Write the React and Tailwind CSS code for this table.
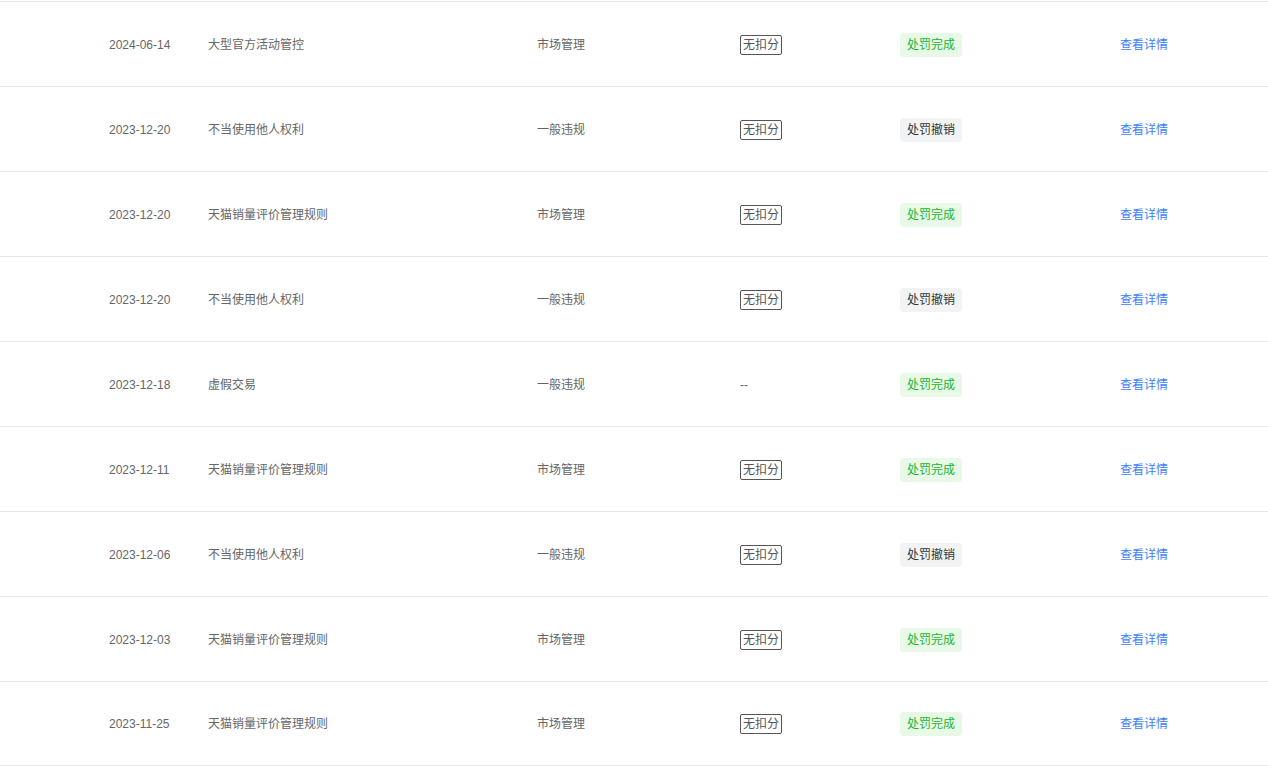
import React from "react";

const rows = [
  { date: "2024-06-14", title: "大型官方活动管控", type: "市场管理", deduct: true, done: true },
  { date: "2023-12-20", title: "不当使用他人权利", type: "一般违规", deduct: true, done: false },
  { date: "2023-12-20", title: "天猫销量评价管理规则", type: "市场管理", deduct: true, done: true },
  { date: "2023-12-20", title: "不当使用他人权利", type: "一般违规", deduct: true, done: false },
  { date: "2023-12-18", title: "虚假交易", type: "一般违规", deduct: false, done: true },
  { date: "2023-12-11", title: "天猫销量评价管理规则", type: "市场管理", deduct: true, done: true },
  { date: "2023-12-06", title: "不当使用他人权利", type: "一般违规", deduct: true, done: false },
  { date: "2023-12-03", title: "天猫销量评价管理规则", type: "市场管理", deduct: true, done: true },
  { date: "2023-11-25", title: "天猫销量评价管理规则", type: "市场管理", deduct: true, done: true },
];

const font = { fontFamily: '"Liberation Sans", "Noto Sans CJK SC", sans-serif' };

const App = () => {
  return (
    <div className="w-[1268px] bg-white pt-[1px] text-[12px] text-[#666]" style={font}>
      {rows.map((r, i) => (
        <div
          key={i}
          className={
            "flex items-center h-[85px] border-t border-[#e8e8e8] pl-[109px] pt-[1px]" +
            (i === rows.length - 1 ? " border-b" : "")
          }
        >
          <div className="w-[99px]">{r.date}</div>
          <div className="w-[329px]">{r.title}</div>
          <div className="w-[203px]">{r.type}</div>
          <div className="w-[160px]">
            {r.deduct ? (
              <span className="inline-block border border-[#555] rounded-[2px] px-[2px] leading-[18px] text-[#555]">
                无扣分
              </span>
            ) : (
              <span className="text-[#666]">--</span>
            )}
          </div>
          <div className="w-[220px]">
            {r.done ? (
              <span className="inline-block rounded-[4px] bg-[#e8f9e8] text-[#1db42c] px-[7px] leading-[24px]">
                处罚完成
              </span>
            ) : (
              <span className="inline-block rounded-[4px] bg-[#f2f3f5] text-[#333] px-[7px] leading-[24px]">
                处罚撤销
              </span>
            )}
          </div>
          <a className="text-[#3d7eff] cursor-pointer">查看详情</a>
        </div>
      ))}
    </div>
  );
};

export default App;
